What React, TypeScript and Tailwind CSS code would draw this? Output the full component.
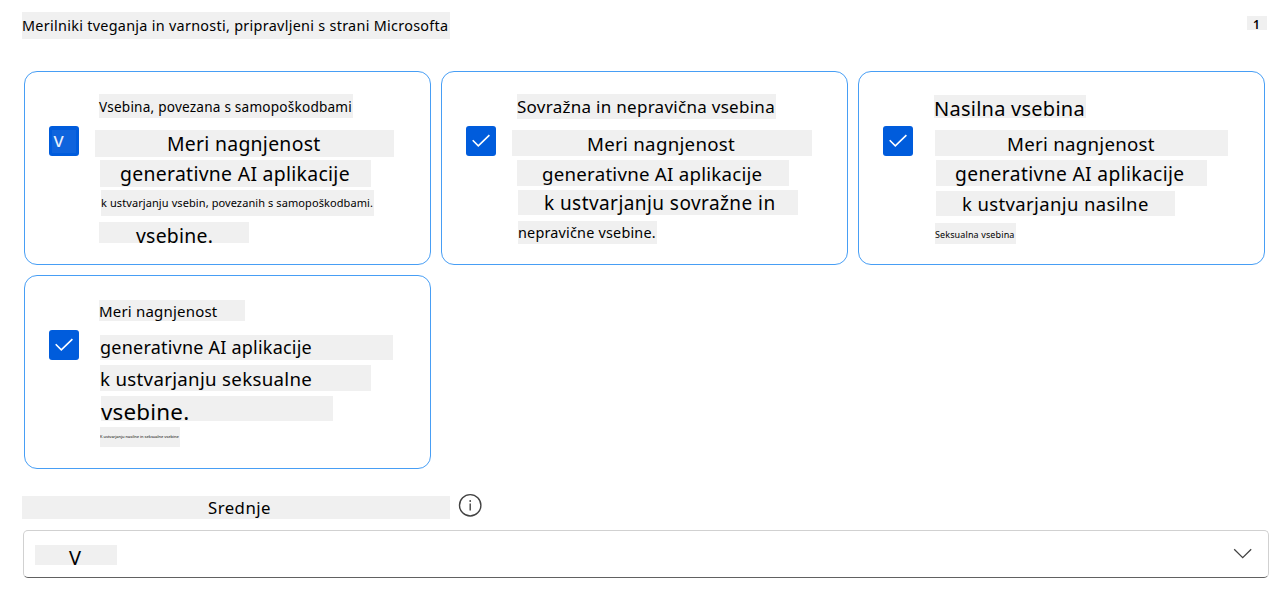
import type { ReactNode } from "react";

function Line({ className, children }: { className: string; children: ReactNode }) {
  return <div className={`shrink-0 whitespace-nowrap bg-[#f0f0f0] text-black ${className}`}>{children}</div>;
}

function Checkbox({ glyph }: { glyph?: string }) {
  return (
    <span className="mt-[54px] ml-6 flex size-[30px] shrink-0 items-center justify-center rounded-[3px] bg-[#005cdc]">
      {glyph ? (
        <span className="mt-px -ml-px h-[23px] w-6 bg-[#0f64dd] pl-[2px] text-[20px] leading-[19px] text-[#e8f0fc]">{glyph}</span>
      ) : (
        <svg viewBox="0 0 30 30" className="size-[30px]" fill="none" stroke="white" strokeWidth="1.6">
          <path d="M6.7 14.3 L12.3 19.9 L23.4 9.1" />
        </svg>
      )}
    </span>
  );
}

function Card({ glyph, children }: { glyph?: string; children: ReactNode }) {
  return (
    <section className="flex h-[194px] w-[407px] rounded-[13px] border border-[#479ef5] bg-white">
      <Checkbox glyph={glyph} />
      <div className="flex min-w-0 flex-col items-start">{children}</div>
    </section>
  );
}

export default function App() {
  return (
    <main className="h-[591px] w-[1279px] overflow-hidden bg-white font-['Noto_Sans',sans-serif]">
      <header className="flex h-[71px] items-start justify-between pt-3 pr-3 pl-[22px]">
        <Line className="h-[27px] w-[428px] text-[14.4px] leading-[28px] tracking-[0.29px]">
          Merilniki tveganja in varnosti, pripravljeni s strani Microsofta
        </Line>
        <Line className="mt-1 h-[14px] w-5 pl-[6px] text-[12px] leading-[17px] font-semibold">1</Line>
      </header>

      <div className="ml-6 grid grid-cols-[407px_407px_407px] gap-[10px]">
        <Card glyph="v">
          <Line className="mt-[22px] ml-5 h-6 w-[254px] text-[13.6px] leading-[25px] tracking-[0.21px]">Vsebina, povezana s samopoškodbami</Line>
          <Line className="mt-3 ml-4 h-[27px] w-[299px] pl-[72px] text-[19.4px] leading-[28px] tracking-[0.28px]">Meri nagnjenost</Line>
          <Line className="mt-[3px] ml-[21px] h-[27px] w-[271px] pl-5 text-[19.4px] leading-[28px] tracking-[0.3px]">generativne AI aplikacije</Line>
          <Line className="mt-[3px] ml-[22px] h-[26px] w-[273px] text-[11px] leading-[26px] tracking-[0.09px]">
            k ustvarjanju vsebin, povezanih s samopoškodbami.
          </Line>
          <Line className="mt-[6px] ml-5 h-[21px] w-[150px] pl-[37px] text-[19.4px] leading-[27px] tracking-[0.25px]">vsebine.</Line>
        </Card>

        <Card>
          <Line className="mt-[22px] ml-[21px] h-[25px] w-[259px] text-[17px] leading-[26px] tracking-[0.28px]">Sovražna in nepravična vsebina</Line>
          <Line className="mt-[11px] ml-4 h-[26px] w-[300px] pl-[75px] text-[18.7px] leading-[27px] tracking-[0.28px]">Meri nagnjenost</Line>
          <Line className="mt-1 ml-[21px] h-[26px] w-[272px] pl-[25px] text-[18.7px] leading-[27px] tracking-[0.24px]">generativne AI aplikacije</Line>
          <Line className="mt-1 ml-[22px] h-[25px] w-[280px] pl-[26px] text-[19px] leading-[27px] tracking-[0.43px]">k ustvarjanju sovražne in</Line>
          <Line className="mt-[6px] ml-[22px] h-[23px] w-[139px] text-[14.4px] leading-[23px] tracking-[0.2px]">nepravične vsebine.</Line>
        </Card>

        <Card>
          <Line className="mt-[23px] ml-[21px] h-[23px] w-[152px] text-[20px] leading-[27px] tracking-[0.25px]">Nasilna vsebina</Line>
          <Line className="mt-3 ml-[22px] h-[26px] w-[293px] pl-[72px] text-[18.7px] leading-[27px] tracking-[0.26px]">Meri nagnjenost</Line>
          <Line className="mt-1 ml-[23px] h-[26px] w-[271px] pl-[19px] text-[19.2px] leading-[28px] tracking-[0.38px]">generativne AI aplikacije</Line>
          <Line className="mt-[5px] ml-[23px] h-[25px] w-[239px] pl-[26px] text-[18.5px] leading-[26px] tracking-[0.38px]">k ustvarjanju nasilne</Line>
          <Line className="mt-[7px] ml-[22px] h-[21px] w-[81px] text-[9px] leading-[23px] tracking-[0.12px]">Seksualna vsebina</Line>
        </Card>

        <Card>
          <Line className="mt-6 ml-5 h-[21px] w-[146px] text-[15px] leading-[22px] tracking-[0.2px]">Meri nagnjenost</Line>
          <Line className="mt-[14px] ml-[21px] h-[25px] w-[293px] text-[18px] leading-[25px] tracking-[0.22px]">generativne AI aplikacije</Line>
          <Line className="mt-[5px] ml-[21px] h-[26px] w-[271px] text-[18.7px] leading-[27px] tracking-[0.3px]">k ustvarjanju seksualne</Line>
          <Line className="mt-[5px] ml-[22px] h-[25px] w-[232px] text-[22.4px] leading-[31px] tracking-[0.2px]">vsebine.</Line>
          <Line className="mt-[6px] ml-[21px] h-5 w-20 overflow-hidden text-[4px] leading-[20px]">
            K ustvarjanju nasilne in seksualne vsebine
          </Line>
        </Card>
      </div>

      <div className="mt-6 ml-[22px] flex items-start gap-2">
        <Line className="mt-[3px] h-[23px] w-[428px] pl-[186px] text-[16.8px] leading-[24px] tracking-[0.45px]">Srednje</Line>
        <svg viewBox="0 0 24 24" className="size-6" fill="none" stroke="#424242" strokeWidth="1.4">
          <circle cx="12.2" cy="12.3" r="10.7" />
          <path d="M12.2 10.6 V17.5" />
          <circle cx="12.2" cy="8" r="0.9" fill="#424242" stroke="none" />
        </svg>
      </div>

      <button className="mt-[11px] ml-[23px] flex h-12 w-[1246px] items-start justify-between rounded-[5px] border border-[#d1d1d1] border-b-[#616161] bg-white pr-[15px] pl-[11px] text-left">
        <Line className="mt-[14px] h-5 w-[82px] pl-[34px] text-[20px] leading-[25px]">V</Line>
        <svg viewBox="0 0 20 20" className="mt-[13px] size-5" fill="none" stroke="#424242" strokeWidth="1.3">
          <path d="M1.2 5.2 L9.7 13.7 L18.2 5.2" />
        </svg>
      </button>
    </main>
  );
}
